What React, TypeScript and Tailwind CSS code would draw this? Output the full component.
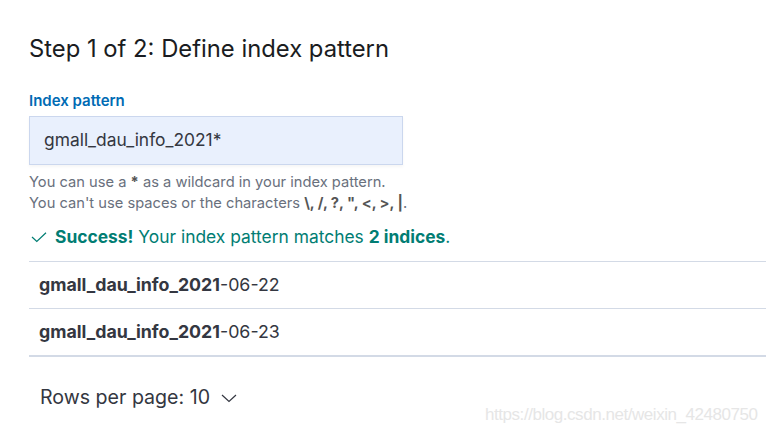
import React from "react";

export default function App() {
  return (
    <div className="w-[766px] h-[431px] bg-white overflow-hidden relative" style={{ fontFamily: "Inter, 'Noto Sans', sans-serif" }}>
      <div className="pl-[29px] pt-[33px]">
        <h1 className="text-[23.8px] leading-[32px] text-[#1a1c21] font-normal">Step 1 of 2: Define index pattern</h1>
        <div className="mt-[27px] text-[15px] leading-[18px] font-semibold text-[#006bb4]">Index pattern</div>
        <div className="mt-[6px] w-[374px] h-[49px] bg-[#e9f0fd] border border-[#cbd7ee] shadow-[0_2px_3px_rgba(0,0,0,0.04)] flex items-center pl-[14px] text-[17.4px] text-[#343741]">
          gmall_dau_info_2021*
        </div>
        <div className="mt-[7px] text-[14.7px] leading-[21px] text-[#69707d]">
          <div>You can use a <span className="font-bold text-[#555]">*</span> as a wildcard in your index pattern.</div>
          <div>You can't use spaces or the characters <span className="font-bold text-[#555]">\, /, ?, ", &lt;, &gt;, |</span>.</div>
        </div>
        <div className="mt-[11px] h-[24px] flex items-center text-[17.4px] leading-[24px] text-[#017d73]">
          <svg width="16" height="16" viewBox="0 0 16 16" className="ml-[2px] mr-[8px]" fill="none" stroke="#017d73" strokeWidth="1.2">
            <path d="M1 8 L5.8 12.5 L15 3.8" />
          </svg>
          <span><span className="font-bold">Success!</span> Your index pattern matches <span className="font-bold">2 indices</span>.</span>
        </div>
        <div className="mt-[12px] border-t border-[#d3dae6]">
          <div className="h-[47px] flex items-center pl-[10px] text-[17.8px] text-[#343741] border-b border-[#d3dae6]">
            <span className="font-bold">gmall_dau_info_2021</span>-06-22
          </div>
          <div className="h-[48px] flex items-center pl-[10px] text-[17.8px] text-[#343741] border-b-2 border-[#d3dae6]">
            <span className="font-bold">gmall_dau_info_2021</span>-06-23
          </div>
        </div>
        <div className="mt-[29px] pl-[11px] h-[24px] flex items-center text-[19.6px] text-[#343741]">
          <span>Rows per page: 10</span>
          <svg width="16" height="16" viewBox="0 0 16 16" className="ml-[11px]" fill="none" stroke="#343741" strokeWidth="1.2">
            <path d="M1 5 L8 11.5 L15 5" />
          </svg>
        </div>
      </div>
      <div className="absolute left-[485px] top-[402px] text-[17px] text-[#e6e6e6] tracking-[-0.45px]" style={{ fontFamily: "'Liberation Sans', Arial, sans-serif" }}>
        https://blog.csdn.net/weixin_42480750
      </div>
    </div>
  );
}
